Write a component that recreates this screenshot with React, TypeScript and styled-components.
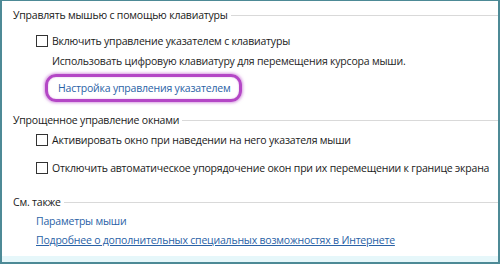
import * as React from 'react';
import styled, { createGlobalStyle } from 'styled-components';

const GlobalStyle = createGlobalStyle`
  html, body {
    margin: 0;
    padding: 0;
    background: #ffffff;
  }
  body {
    font-family: "Open Sans", "Noto Sans", sans-serif;
    font-size: 10.5px;
    letter-spacing: -0.2px;
  }
`;

const Frame = styled.div`
  box-sizing: border-box;
  width: 500px;
  height: 264px;
  border: 2px solid #4d8a96;
  border-top-width: 1px;
  border-bottom: 0;
  background: #ffffff;
  display: flex;
  flex-direction: column;
  overflow: hidden;
`;

const Content = styled.div`
  flex: 1;
  padding: 5px 0 0 11px;
  display: flex;
  flex-direction: column;
`;

const Footer = styled.div`
  height: 6px;
  background: #e6f7fa;
  border-bottom: 2px solid #4d8a96;
`;

const SectionHeader = styled.div<{ $mt?: number }>`
  display: flex;
  align-items: center;
  gap: 3px;
  margin-top: ${p => p.$mt ?? 0}px;
  height: 18px;
  color: #1a1a1a;
  white-space: nowrap;

  &::after {
    content: '';
    flex: 1;
    height: 1px;
    background: #d9d9d9;
  }
`;

const Row = styled.div<{ $mt?: number; $indent?: number }>`
  display: flex;
  align-items: center;
  gap: 4px;
  margin-top: ${p => p.$mt ?? 0}px;
  margin-left: ${p => p.$indent ?? 23}px;
  height: 16px;
  color: #1a1a1a;
  white-space: nowrap;
`;

const Box = styled.span`
  box-sizing: border-box;
  width: 12px;
  height: 12px;
  border: 1px solid #333333;
  background: #ffffff;
  flex: none;
`;

const Hint = styled(Row)`
  color: #1e1e1e;
`;

const Highlight = styled.div`
  align-self: flex-start;
  margin-left: 32px;
  margin-top: 5px;
  padding: 3px 9px 3px 10px;
  border: 3px solid #b447c6;
  border-radius: 11px;
  box-shadow: 0 0 3px 1px rgba(180, 71, 198, 0.55), inset 0 0 2px rgba(180, 71, 198, 0.4);
`;

const Link = styled.a<{ $underline?: boolean }>`
  display: block;
  line-height: 16px;
  color: #2a62a6;
  text-decoration: ${p => (p.$underline ? 'underline' : 'none')};
  white-space: nowrap;
  cursor: pointer;
`;

const LinkRow = styled.div<{ $mt?: number }>`
  margin-left: 23px;
  margin-top: ${p => p.$mt ?? 0}px;
  height: 16px;
  display: flex;
  align-items: center;
`;

export default function App() {
  return (
    <>
      <GlobalStyle />
      <Frame>
        <Content>
          <SectionHeader>Управлять мышью с помощью клавиатуры</SectionHeader>
          <Row $mt={9}>
            <Box />
            Включить управление указателем с клавиатуры
          </Row>
          <Hint $mt={4} $indent={39}>
            Использовать цифровую клавиатуру для перемещения курсора мыши.
          </Hint>
          <Highlight>
            <Link>Настройка управления указателем</Link>
          </Highlight>
          <SectionHeader $mt={9}>Упрощенное управление окнами</SectionHeader>
          <Row $mt={3}>
            <Box />
            Активировать окно при наведении на него указателя мыши
          </Row>
          <Row $mt={12}>
            <Box />
            Отключить автоматическое упорядочение окон при их перемещении к границе экрана
          </Row>
          <SectionHeader $mt={17}>См. также</SectionHeader>
          <LinkRow $mt={2}>
            <Link>Параметры мыши</Link>
          </LinkRow>
          <LinkRow $mt={3}>
            <Link $underline>Подробнее о дополнительных специальных возможностях в Интернете</Link>
          </LinkRow>
        </Content>
        <Footer />
      </Frame>
    </>
  );
}
